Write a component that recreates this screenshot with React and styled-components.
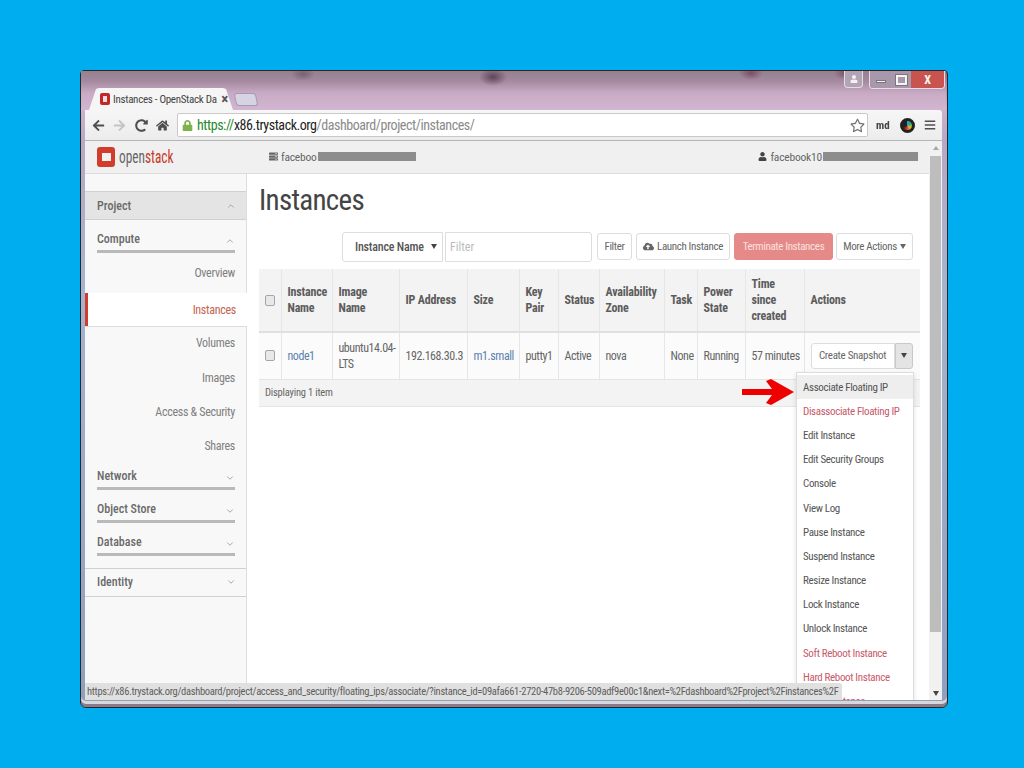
import React from "react";
import styled, { createGlobalStyle } from "styled-components";
import { ChevronDown, ChevronUp } from "lucide-react";
import { FaArrowLeft, FaArrowRight, FaBars, FaCloudUploadAlt, FaHome, FaLock, FaRedoAlt, FaRegStar, FaServer, FaUser } from "react-icons/fa";

const GlobalStyle = createGlobalStyle`
  html, body { margin: 0; padding: 0; }
  body { background: #00aeef; font-family: Roboto, "Liberation Sans", sans-serif; font-stretch: 75%; }
  * { box-sizing: border-box; }
`;

const Stage = styled.div`
  width: 1024px;
  height: 768px;
  padding: 70px 0 0 80px;
  background: #00aeef;
  overflow: hidden;
`;

const Window = styled.div`
  position: relative;
  width: 868px;
  height: 638px;
  display: flex;
  flex-direction: column;
  padding: 0 5px 7px 4px;
  border: 1px solid #26282c;
  border-radius: 4px 4px 6px 6px;
  background: linear-gradient(180deg, #7d6a80 0, #a58da8 12px, #cdb2cf 36px, #b9a8c4 70px, #a6b4cf 200px, #8f9fc0 100%);
  box-shadow: inset 0 -3px 0 #8a7a8c, inset 0 -6px 0 #d8d8da;
  filter: blur(0.35px);
`;

const TitleBar = styled.div`
  position: relative;
  height: 39px;
  flex: none;
  padding: 17px 0 0 8px;
  display: flex;
  align-items: flex-end;
  gap: 3px;
  margin: 0 -4px;
  background:
    radial-gradient(ellipse 14px 9px at 412px 6px, rgba(70, 40, 60, 0.7), transparent),
    radial-gradient(ellipse 12px 7px at 222px 3px, rgba(90, 60, 80, 0.5), transparent),
    radial-gradient(ellipse 12px 7px at 670px 2px, rgba(110, 40, 70, 0.6), transparent),
    radial-gradient(ellipse 12px 7px at 765px 2px, rgba(110, 40, 70, 0.6), transparent),
    linear-gradient(180deg, #94808f 0, #a4899f 10px, #c8aac4 22px, #d2b6d2 100%);
`;

const ActiveTab = styled.div`
  width: 144px;
  height: 22px;
  padding: 0 5px 0 11px;
  display: flex;
  align-items: center;
  gap: 3px;
  background: #f5f5f5;
  clip-path: polygon(0 100%, 7px 5%, 10px 0, calc(100% - 10px) 0, calc(100% - 7px) 5%, 100% 100%);
  font-size: 11px;
  letter-spacing: -0.3px;
  color: #444;
  white-space: nowrap;
`;

const TabTitle = styled.span`
  flex: 1;
  min-width: 0;
`;

const TabClose = styled.span`
  font-size: 15px;
  font-weight: 700;
  color: #555;
`;

const Favicon = styled.span`
  flex: none;
  width: 10px;
  height: 12px;
  border-radius: 2px;
  border: 3px solid #c0282c;
  background: #f3d9d9;
`;

const NewTab = styled.div`
  width: 22px;
  height: 13px;
  margin: 0 0 4px -1px;
  border-radius: 3px;
  background: #d6d3e2;
  border: 1px solid #a79ab0;
  transform: skewX(12deg);
`;

const WindowControls = styled.div`
  position: absolute;
  top: 0;
  right: 1px;
  display: flex;
  align-items: flex-start;
  gap: 6px;
`;

const ProfileButton = styled.div`
  width: 19px;
  height: 17px;
  display: flex;
  align-items: center;
  justify-content: center;
  border: 1px solid #e6dbe6;
  border-top: 0;
  border-radius: 0 0 4px 4px;
  color: #f4f0f4;
  font-size: 8px;
  background: #b3a4b3;
`;

const ControlGroup = styled.div`
  display: flex;
  height: 18px;
  border: 1px solid #e6dbe6;
  border-top: 0;
  border-radius: 0 0 4px 4px;
  overflow: hidden;
`;

const ControlButton = styled.div`
  width: ${(p) => p.$w}px;
  display: flex;
  align-items: center;
  justify-content: center;
  font-size: 12px;
  font-weight: 700;
  color: #f4f4f4;
  background: ${(p) => p.$bg};
`;

const MinGlyph = styled.span`
  width: 10px;
  height: 3px;
  margin-top: 3px;
  background: #f4f4f4;
  border: 1px solid #777;
`;

const MaxGlyph = styled.span`
  width: 11px;
  height: 10px;
  border: 2px solid #f4f4f4;
  outline: 1px solid #777;
`;

const Toolbar = styled.div`
  height: 31px;
  flex: none;
  padding: 0 6px 0 7px;
  display: flex;
  align-items: center;
  background: linear-gradient(180deg, #f6f6f6, #ececec);
  border-top-right-radius: 3px;
  border-bottom: 1px solid #b5b5b5;
  color: #555;
`;

const NavIcon = styled.span`
  flex: none;
  width: ${(p) => p.$w || 22}px;
  display: flex;
  align-items: center;
  color: ${(p) => p.$dim ? "#c4c4c4" : "#4f4f4f"};
  font-size: ${(p) => p.$size || 13}px;
`;

const Omnibox = styled.div`
  flex: 1;
  height: 24px;
  padding: 0 2px 0 4px;
  display: flex;
  align-items: center;
  gap: 4px;
  background: #fff;
  border: 1px solid #c9c9c9;
  border-radius: 2px;
  font-size: 14px;
  letter-spacing: -0.45px;
  white-space: nowrap;
`;

const UrlHost = styled.span`
  flex: 1;
  color: #1f8a2c;
`;

const UrlDark = styled.span`
  color: #222;
`;

const UrlPath = styled.span`
  color: #8a8a8a;
`;

const UserBadge = styled.span`
  width: 32px;
  padding-left: 8px;
  font-size: 11px;
  font-weight: 700;
  color: #444;
`;

const ColorWheel = styled.span`
  flex: none;
  width: 15px;
  height: 15px;
  margin-right: 9px;
  border-radius: 50%;
  border: 3px solid #222;
  background: conic-gradient(#2f9be0, #28b36b, #e8c02a, #e0402a, #222 70%, #222);
`;

const Viewport = styled.div`
  position: relative;
  flex: 1;
  min-height: 0;
  display: flex;
  overflow: hidden;
  background: #fff;
`;

const PageColumn = styled.div`
  flex: 1;
  min-width: 0;
  display: flex;
  flex-direction: column;
`;

const TopBar = styled.div`
  height: 33px;
  flex: none;
  display: flex;
  align-items: center;
  padding: 0 11px 1px 12px;
  background: #f0f0f0;
  border-bottom: 1px solid #dcdcdc;
  font-size: 11.5px;
  letter-spacing: -0.2px;
  color: #666;
`;

const Logo = styled.div`
  width: 172px;
  display: flex;
  align-items: center;
  gap: 4px;
`;

const LogoMark = styled.span`
  width: 18px;
  height: 20px;
  display: flex;
  align-items: center;
  justify-content: center;
  border-radius: 3px;
  background: #d13c2c;
`;

const LogoHole = styled.span`
  width: 9px;
  height: 8px;
  background: #f4f0ee;
`;

const LogoText = styled.span`
  font-size: 19px;
  letter-spacing: 0;
  color: #666;
  transform: scaleX(0.7);
  transform-origin: left center;
`;

const LogoAccent = styled.span`
  color: #c8392b;
`;

const TopEntry = styled.div`
  display: flex;
  align-items: center;
  gap: 3px;
  margin-left: ${(p) => p.$push ? "auto" : "0"};
`;

const Redacted = styled.span`
  width: ${(p) => p.$w}px;
  height: 9px;
  background: #8d8d8d;
  margin-left: -2px;
`;

const Body = styled.div`
  flex: 1;
  min-height: 0;
  display: flex;
`;

const Sidebar = styled.nav`
  width: 162px;
  flex: none;
  padding-top: 17px;
  display: flex;
  flex-direction: column;
  background: #f8f8f8;
  border-right: 1px solid #dedede;
  color: #6a6a6a;
`;

const ProjectRow = styled.div`
  height: 29px;
  flex: none;
  margin-top: ${(p) => p.$gap || 0}px;
  display: flex;
  align-items: center;
  justify-content: space-between;
  padding: 0 10px 0 12px;
  font-size: 12px;
  font-weight: 500;
  background: ${(p) => p.$active ? "#e4e4e4" : "transparent"};
  border-top: 1px solid #d0d0d0;
  border-bottom: 1px solid #d0d0d0;
`;

const GroupRow = styled.div`
  height: ${(p) => p.$h || 33}px;
  flex: none;
  margin: 0 11px 0 12px;
  padding-bottom: 4px;
  display: flex;
  align-items: flex-end;
  justify-content: space-between;
  font-size: 12px;
  font-weight: 500;
  border-bottom: 3px solid #b9b9b9;
`;

const NavItem = styled.div`
  height: ${(p) => p.$h || 34.4}px;
  flex: none;
  padding-right: 11px;
  display: flex;
  align-items: center;
  justify-content: flex-end;
  font-size: 12px;
  letter-spacing: -0.3px;
  color: ${(p) => p.$active ? "#c4644f" : "#808080"};
  ${(p) => p.$active && "background: #fff; border-left: 3px solid #d13c2c; margin-right: -1px; box-shadow: 0 1px 0 #ddd;"}
`;

const Main = styled.main`
  flex: 1;
  min-width: 0;
  padding: 0 9px 0 12px;
`;

const Heading = styled.h1`
  margin: 10px 0 0;
  height: 44px;
  font-size: 29px;
  font-weight: 400;
  letter-spacing: -0.7px;
  line-height: 32px;
  color: #444;
`;

const Actions = styled.div`
  height: 37px;
  display: flex;
  align-items: center;
  justify-content: flex-end;
  padding-right: 7px;
  gap: 4px;
`;

const SearchSelect = styled.div`
  width: 101px;
  height: 30px;
  margin-right: -2px;
  padding: 0 5px 0 12px;
  display: flex;
  align-items: center;
  justify-content: space-between;
  white-space: nowrap;
  background: #fff;
  border: 1px solid #ddd;
  border-radius: 3px 0 0 3px;
  font-size: 12px;
  letter-spacing: -0.2px;
  font-weight: 500;
  color: #555;
`;

const SmallCaret = styled.span`
  width: 0;
  height: 0;
  border-left: 3px solid transparent;
  border-right: 3px solid transparent;
  border-top: 5px solid ${(p) => p.$color || "#444"};
`;

const SearchInput = styled.div`
  width: 147px;
  height: 30px;
  padding: 0 4px;
  display: flex;
  align-items: center;
  background: #fff;
  border: 1px solid #ddd;
  border-radius: 0 3px 3px 0;
  font-size: 12px;
  color: #bbb;
`;

const Button = styled.div`
  width: ${(p) => p.$w}px;
  height: 27px;
  margin-left: ${(p) => p.$nudge || 0}px;
  display: flex;
  align-items: center;
  justify-content: center;
  gap: 3px;
  white-space: nowrap;
  font-size: 11px;
  letter-spacing: -0.35px;
  border-radius: 3px;
  border: 1px solid ${(p) => p.$danger ? "#e58a88" : "#ddd"};
  background: ${(p) => p.$danger ? "#e58a88" : "#fff"};
  color: ${(p) => p.$danger ? "#fbe0df" : "#666"};
`;

const Table = styled.table`
  width: 661px;
  margin-top: 4px;
  table-layout: fixed;
  border-collapse: collapse;
  font-size: 12px;
  color: #666;
`;

const Col = styled.col`
  width: ${(p) => p.$w}px;
`;

const HeadCell = styled.th`
  height: 63px;
  padding: 0 6px;
  text-align: left;
  font-weight: 700;
  letter-spacing: -0.2px;
  line-height: 16px;
  color: #5c5c5c;
  background: #f3f3f3;
  border-left: 1px solid #e6e6e6;
  border-bottom: 2px solid #e0e0e0;
  &:first-child { border-left: 0; }
`;

const Cell = styled.td`
  height: 47px;
  padding: 0 6px;
  line-height: 16px;
  letter-spacing: -0.45px;
  background: #fbfbfb;
  border-left: 1px solid #e6e6e6;
  border-bottom: 1px solid #e4e4e4;
  white-space: ${(p) => p.$wrap ? "normal" : "nowrap"};
  &:first-child { border-left: 0; }
`;

const FootCell = styled.td`
  height: 27px;
  padding: 0 6px;
  font-size: 10.5px;
  letter-spacing: -0.2px;
  background: #f3f3f3;
  border-bottom: 1px solid #e4e4e4;
`;

const Link = styled.span`
  color: #5b82ad;
`;

const Check = styled.span`
  display: block;
  width: 10px;
  height: 11px;
  background: #e8e8e8;
  border: 1px solid #a6a6a6;
  border-radius: 2px;
`;

const SplitButton = styled.div`
  display: flex;
  height: 26px;
  letter-spacing: -0.3px;
`;

const SplitMain = styled.div`
  width: 84px;
  display: flex;
  align-items: center;
  justify-content: center;
  font-size: 11px;
  background: #fff;
  border: 1px solid #ddd;
  border-radius: 3px 0 0 3px;
`;

const SplitToggle = styled.div`
  width: 18px;
  display: flex;
  align-items: center;
  justify-content: center;
  background: #e4e4e4;
  border: 1px solid #c8c8c8;
  border-radius: 0 3px 3px 0;
`;

const Menu = styled.ul`
  position: absolute;
  top: 231px;
  left: 711px;
  width: 118px;
  margin: 0;
  padding: 2px 0 0;
  list-style: none;
  background: #fff;
  border: 1px solid #dcdcdc;
  box-shadow: 0 2px 5px rgba(0, 0, 0, 0.12);
`;

const MenuItem = styled.li`
  height: 24.2px;
  padding-left: 6px;
  display: flex;
  align-items: center;
  white-space: nowrap;
  font-size: 11px;
  letter-spacing: -0.35px;
  color: ${(p) => p.$danger ? "#c8596a" : "#555"};
  background: ${(p) => p.$hover ? "#eeeeee" : "transparent"};
`;

const RedArrow = styled.svg`
  position: absolute;
  top: 308px;
  left: 661px;
`;

const Scrollbar = styled.div`
  width: 13px;
  flex: none;
  display: flex;
  flex-direction: column;
  align-items: center;
  padding: 5px 0 4px;
  background: #f1f1f1;
`;

const ScrollThumb = styled.div`
  width: 11px;
  height: 476px;
  margin: 6px 0 auto;
  background: #bdbdbd;
`;

const UpCaret = styled.span`
  width: 0;
  height: 0;
  border-left: 3px solid transparent;
  border-right: 3px solid transparent;
  border-bottom: 4px solid #a8a8a8;
`;

const StatusBubble = styled.div`
  position: absolute;
  left: 4px;
  bottom: 7px;
  width: 757px;
  height: 17px;
  padding: 0 2px;
  display: flex;
  align-items: center;
  white-space: nowrap;
  overflow: hidden;
  font-size: 10.5px;
  letter-spacing: -0.3px;
  color: #5e5e5e;
  background: #e0e0e0;
  border-top-right-radius: 3px;
`;

const instanceHeaders = [
  ["Instance", "Name"], ["Image", "Name"], ["IP Address"], ["Size"], ["Key", "Pair"], ["Status"],
  ["Availability", "Zone"], ["Task"], ["Power", "State"], ["Time", "since", "created"], ["Actions"],
];
const columnWidths = [22, 51, 67, 68, 52, 39, 41, 65, 33, 48, 59, 116];
const menuEntries = [
  ["Associate Floating IP"], ["Disassociate Floating IP", true], ["Edit Instance"], ["Edit Security Groups"],
  ["Console"], ["View Log"], ["Pause Instance"], ["Suspend Instance"], ["Resize Instance"], ["Lock Instance"],
  ["Unlock Instance"], ["Soft Reboot Instance", true], ["Hard Reboot Instance", true], ["Delete Instance", true],
];
const statusUrl = "https://x86.trystack.org/dashboard/project/access_and_security/floating_ips/associate/?instance_id=09afa661-2720-47b8-9206-509adf9e00c1&next=%2Fdashboard%2Fproject%2Finstances%2F";

function Group({ label, open, h }) {
  const Icon = open ? ChevronUp : ChevronDown;
  return (
    <GroupRow $h={h}>
      {label}
      <Icon size={10} color="#999" />
    </GroupRow>
  );
}

export default function App() {
  return (
    <Stage>
      <GlobalStyle />
      <Window>
        <TitleBar>
          <ActiveTab>
            <Favicon />
            <TabTitle>Instances - OpenStack Da</TabTitle>
            <TabClose>×</TabClose>
          </ActiveTab>
          <NewTab />
          <WindowControls>
            <ProfileButton><FaUser /></ProfileButton>
            <ControlGroup>
              <ControlButton $w={21} $bg="#a998ab"><MinGlyph /></ControlButton>
              <ControlButton $w={20} $bg="#a998ab"><MaxGlyph /></ControlButton>
              <ControlButton $w={33} $bg="#c9544f">X</ControlButton>
            </ControlGroup>
          </WindowControls>
        </TitleBar>
        <Toolbar>
          <NavIcon $w={21}><FaArrowLeft /></NavIcon>
          <NavIcon $dim><FaArrowRight /></NavIcon>
          <NavIcon $w={21}><FaRedoAlt /></NavIcon>
          <NavIcon $w={21}><FaHome /></NavIcon>
          <Omnibox>
            <FaLock size={11} color="#7fb24d" />
            <UrlHost>https://<UrlDark>x86.trystack.org</UrlDark><UrlPath>/dashboard/project/instances/</UrlPath></UrlHost>
            <FaRegStar size={15} color="#777" />
          </Omnibox>
          <UserBadge>md</UserBadge>
          <ColorWheel />
          <NavIcon $w={12} $size={12}><FaBars /></NavIcon>
        </Toolbar>
        <Viewport>
          <PageColumn>
            <TopBar>
              <Logo>
                <LogoMark><LogoHole /></LogoMark>
                <LogoText>open<LogoAccent>stack</LogoAccent></LogoText>
              </Logo>
              <TopEntry>
                <FaServer size={9} />
                faceboo
                <Redacted $w={98} />
              </TopEntry>
              <TopEntry $push>
                <FaUser size={9} color="#444" />
                facebook10
                <Redacted $w={95} />
              </TopEntry>
            </TopBar>
            <Body>
              <Sidebar>
                <ProjectRow $active>
                  Project
                  <ChevronUp size={10} color="#999" />
                </ProjectRow>
                <Group label="Compute" open />
                <NavItem $h={40}>Overview</NavItem>
                <NavItem $h={33} $active>Instances</NavItem>
                <NavItem>Volumes</NavItem>
                <NavItem>Images</NavItem>
                <NavItem>Access &amp; Security</NavItem>
                <NavItem>Shares</NavItem>
                <Group label="Network" h={26} />
                <Group label="Object Store" />
                <Group label="Database" />
                <ProjectRow $gap={12}>
                  Identity
                  <ChevronDown size={10} color="#999" />
                </ProjectRow>
              </Sidebar>
              <Main>
                <Heading>Instances</Heading>
                <Actions>
                  <SearchSelect>Instance Name<SmallCaret /></SearchSelect>
                  <SearchInput>Filter</SearchInput>
                  <Button $w={35} $nudge={1}>Filter</Button>
                  <Button $w={94}><FaCloudUploadAlt size={11} />Launch Instance</Button>
                  <Button $w={99} $danger>Terminate Instances</Button>
                  <Button $w={77} $nudge={-1}>More Actions<SmallCaret $color="#666" /></Button>
                </Actions>
                <Table>
                  <colgroup>
                    {columnWidths.map((w, i) => <Col key={i} $w={w} />)}
                  </colgroup>
                  <thead>
                    <tr>
                      <HeadCell><Check /></HeadCell>
                      {instanceHeaders.map((lines) => (
                        <HeadCell key={lines[0]}>
                          {lines.map((line) => <div key={line}>{line}</div>)}
                        </HeadCell>
                      ))}
                    </tr>
                  </thead>
                  <tbody>
                    <tr>
                      <Cell><Check /></Cell>
                      <Cell><Link>node1</Link></Cell>
                      <Cell $wrap>ubuntu14.04-LTS</Cell>
                      <Cell>192.168.30.3</Cell>
                      <Cell><Link>m1.small</Link></Cell>
                      <Cell>putty1</Cell>
                      <Cell>Active</Cell>
                      <Cell>nova</Cell>
                      <Cell>None</Cell>
                      <Cell>Running</Cell>
                      <Cell>57 minutes</Cell>
                      <Cell>
                        <SplitButton>
                          <SplitMain>Create Snapshot</SplitMain>
                          <SplitToggle><SmallCaret /></SplitToggle>
                        </SplitButton>
                      </Cell>
                    </tr>
                    <tr>
                      <FootCell colSpan={12}>Displaying 1 item</FootCell>
                    </tr>
                  </tbody>
                </Table>
              </Main>
            </Body>
          </PageColumn>
          <Scrollbar>
            <UpCaret />
            <ScrollThumb />
            <SmallCaret $color="#444" />
          </Scrollbar>
          <Menu>
            {menuEntries.map(([label, danger], i) => (
              <MenuItem key={label} $danger={danger} $hover={i === 0}>{label}</MenuItem>
            ))}
          </Menu>
        </Viewport>
        <RedArrow width="52" height="26" viewBox="0 0 52 26">
          <path d="M0 10h30L24 2l5-2 23 13-23 13-5-2 6-8H0z" fill="#ee0000" />
        </RedArrow>
        <StatusBubble>{statusUrl}</StatusBubble>
      </Window>
    </Stage>
  );
}
